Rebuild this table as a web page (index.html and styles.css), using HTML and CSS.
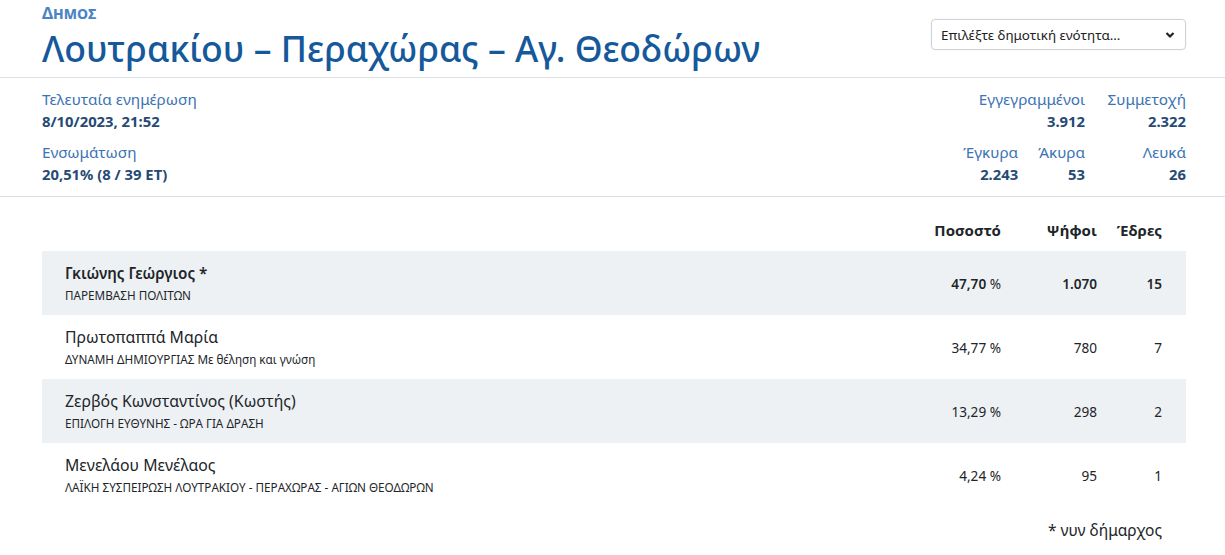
FILE: index.html
```html
<!DOCTYPE html>
<html lang="el">
<head>
<meta charset="utf-8">
<title>Δήμος Λουτρακίου – Περαχώρας – Αγ. Θεοδώρων</title>
<link rel="stylesheet" href="styles.css">
</head>
<body>
<header class="top">
  <div class="titles">
    <div class="kicker">Δημος</div>
    <h1 class="title">Λουτρακίου – Περαχώρας – Αγ. Θεοδώρων</h1>
  </div>
  <div class="select">
    <span>Επιλέξτε δημοτική ενότητα...</span>
    <svg class="chev" width="10" height="8" viewBox="0 0 10 8"><path d="M1.5 2 L5 5.5 L8.5 2" fill="none" stroke="#222" stroke-width="2.2"/></svg>
  </div>
</header>

<section class="info">
  <div class="left">
    <div class="item">
      <div class="label">Τελευταία ενημέρωση</div>
      <div class="value">8/10/2023, 21:52</div>
    </div>
    <div class="item">
      <div class="label">Ενσωμάτωση</div>
      <div class="value">20,51% (8 / 39 ΕΤ)</div>
    </div>
  </div>
  <div class="right">
    <div class="statrow">
      <div class="stat"><div class="label">Εγγεγραμμένοι</div><div class="value">3.912</div></div>
      <div class="stat wide"><div class="label">Συμμετοχή</div><div class="value">2.322</div></div>
    </div>
    <div class="statrow">
      <div class="stat"><div class="label">Έγκυρα</div><div class="value">2.243</div></div>
      <div class="stat"><div class="label">Άκυρα</div><div class="value">53</div></div>
      <div class="stat wide"><div class="label">Λευκά</div><div class="value">26</div></div>
    </div>
  </div>
</section>

<section class="results">
  <div class="row head">
    <div></div>
    <div class="num">Ποσοστό</div>
    <div class="num">Ψήφοι</div>
    <div class="num">Έδρες</div>
  </div>
  <div class="row shade strong">
    <div class="cand"><div class="name">Γκιώνης Γεώργιος *</div><div class="party">ΠΑΡΕΜΒΑΣΗ ΠΟΛΙΤΩΝ</div></div>
    <div class="num">47,70 <span class="pct">%</span></div>
    <div class="num">1.070</div>
    <div class="num">15</div>
  </div>
  <div class="row">
    <div class="cand"><div class="name">Πρωτοπαππά Μαρία</div><div class="party">ΔΥΝΑΜΗ ΔΗΜΙΟΥΡΓΙΑΣ Με θέληση και γνώση</div></div>
    <div class="num">34,77 <span class="pct">%</span></div>
    <div class="num">780</div>
    <div class="num">7</div>
  </div>
  <div class="row shade">
    <div class="cand"><div class="name">Ζερβός Κωνσταντίνος (Κωστής)</div><div class="party">ΕΠΙΛΟΓΗ ΕΥΘΥΝΗΣ - ΩΡΑ ΓΙΑ ΔΡΑΣΗ</div></div>
    <div class="num">13,29 <span class="pct">%</span></div>
    <div class="num">298</div>
    <div class="num">2</div>
  </div>
  <div class="row">
    <div class="cand"><div class="name">Μενελάου Μενέλαος</div><div class="party">ΛΑΪΚΗ ΣΥΣΠΕΙΡΩΣΗ ΛΟΥΤΡΑΚΙΟΥ - ΠΕΡΑΧΩΡΑΣ - ΑΓΙΩΝ ΘΕΟΔΩΡΩΝ</div></div>
    <div class="num">4,24 <span class="pct">%</span></div>
    <div class="num">95</div>
    <div class="num">1</div>
  </div>
  <div class="note">* νυν δήμαρχος</div>
</section>
</body>
</html>
```

FILE: styles.css
```css
* { box-sizing: border-box; }
body {
  margin: 0;
  background: #fff;
  color: #212529;
  font-family: "Noto Sans", "Open Sans", sans-serif;
}
.top {
  display: flex;
  justify-content: space-between;
  align-items: flex-start;
  height: 78px;
  padding: 0 39px 0 42px;
  border-bottom: 1px solid #dcdfe3;
}
.kicker {
  font-size: 16.5px;
  font-weight: 700;
  font-variant: small-caps;
  color: #4a84c6;
  line-height: 25px;
}
.title {
  margin: 0;
  font-size: 35.6px;
  font-weight: 500;
  color: #15599b;
  line-height: 46.5px;
}
.select {
  margin-top: 19px;
  width: 255px;
  height: 31px;
  border: 1px solid #cdd2d8;
  border-radius: 4px;
  box-shadow: 0 0 2px rgba(0,0,0,0.08);
  display: flex;
  align-items: center;
  justify-content: space-between;
  padding: 0 10px 0 9px;
  font-size: 13.4px;
  color: #222;
}
.info {
  display: flex;
  justify-content: space-between;
  padding: 10px 39px 11px 42px;
  border-bottom: 1px solid #dcdfe3;
}
.left, .right { display: flex; flex-direction: column; gap: 9px; }
.label {
  font-size: 15.3px;
  color: #3b73b3;
  line-height: 22px;
}
.value {
  font-size: 14.8px;
  font-weight: 700;
  color: #264a74;
  line-height: 22px;
}
.statrow { display: flex; justify-content: flex-end; gap: 20px; }
.stat { text-align: right; }
.stat.wide { min-width: 81px; }
.results { padding: 23px 39px 0 42px; }
.row {
  display: grid;
  grid-template-columns: 1fr 120px 96px 65px;
  align-items: center;
  height: 64px;
  padding: 0 24px 0 23px;
  font-size: 13.6px;
}
.row.head {
  height: 31px;
  align-items: start;
  font-weight: 700;
  font-size: 15px;
  line-height: 20px;
}
.shade { background: #eef1f4; }
.num { text-align: right; }
.cand { padding-top: 1px; }
.name { font-size: 15.8px; line-height: 23px; }
.party { font-size: 11.7px; line-height: 20px; }
.strong .name { font-weight: 600; font-size: 15.2px; }
.strong .num { font-weight: 600; }
.strong .pct { font-weight: 400; }
.note {
  text-align: right;
  padding: 12px 24px 0 0;
  font-size: 15.5px;
  line-height: 22px;
}
```
